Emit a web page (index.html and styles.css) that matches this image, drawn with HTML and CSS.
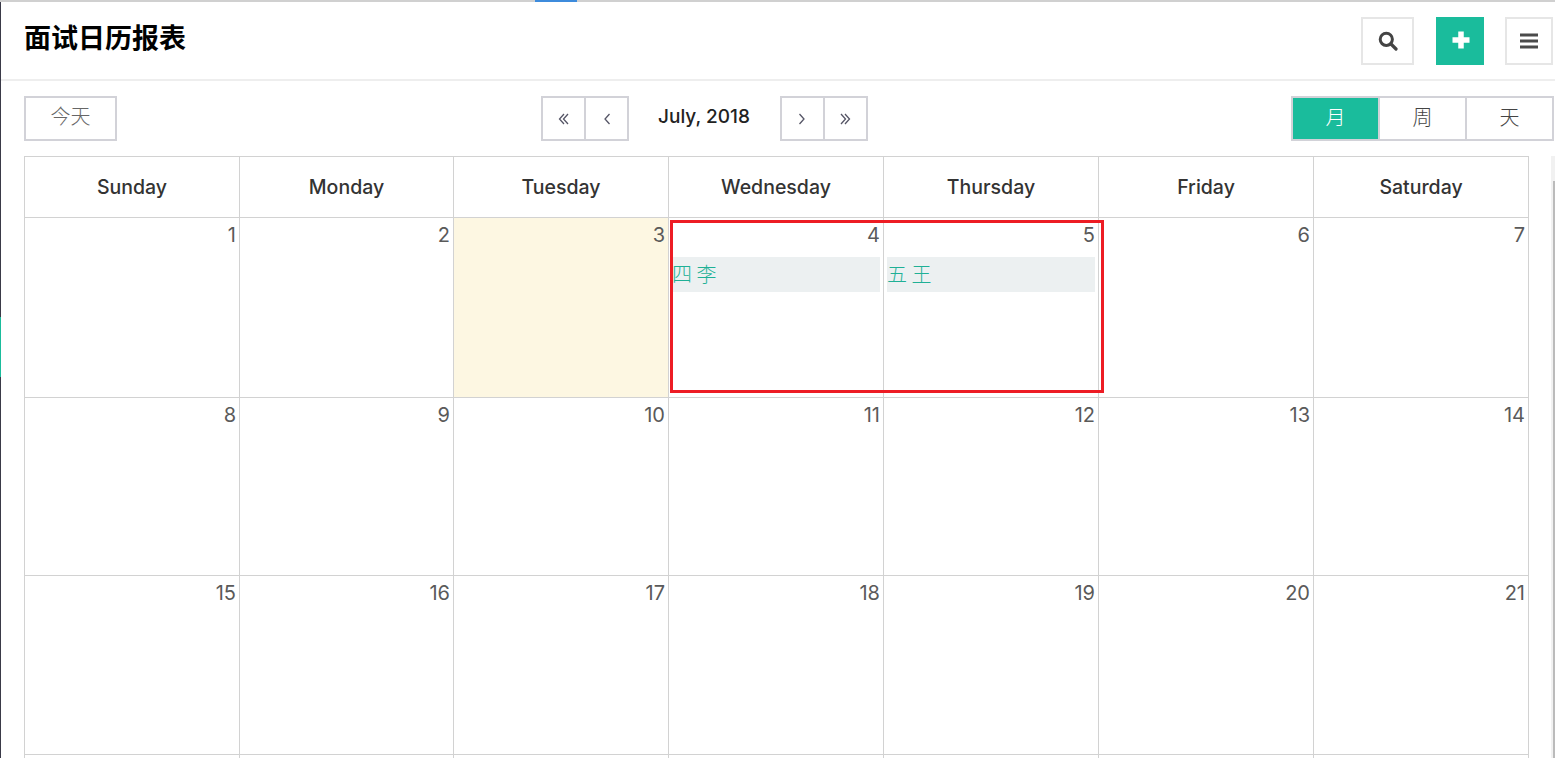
FILE: index.html
```html
<!DOCTYPE html>
<html lang="zh-CN">
<head>
    <meta charset="UTF-8">
    <title>面试日历报表</title>
    <link rel="stylesheet" href="styles.css">
</head>
<body>
    <div class="top-line"><span class="top-line-active"></span></div>

    <div class="page">
        <div class="side-strip"><span class="side-strip-active"></span></div>

        <div class="main">
            <header class="header">
                <h1>面试日历报表</h1>
                <div class="header-actions">
                    <button class="icon-btn search-btn">
                        <svg width="20" height="20" viewBox="0 0 20 20"><circle cx="8.300" cy="8.300" r="6.100" fill="none" stroke="#444" stroke-width="3"/><path d="M13 13l5 5" stroke="#444" stroke-width="3.200" stroke-linecap="round"/></svg>
                    </button>
                    <button class="icon-btn add-btn">
                        <svg class="add-icon" width="18" height="18" viewBox="0 0 18 18"><path d="M9 .5v17M.5 9h17" stroke="#fff" stroke-width="5.500"/></svg>
                    </button>
                    <button class="icon-btn menu-btn">
                        <svg width="18" height="16" viewBox="0 0 18 16"><path d="M0 2h18M0 8h18M0 14h18" stroke="#4a4a4a" stroke-width="3"/></svg>
                    </button>
                </div>
            </header>

            <div class="toolbar">
                <button class="btn today-btn">今天</button>

                <div class="month-nav">
                    <div class="btn-group">
                        <button class="btn nav-btn">
                            <svg width="12" height="12" viewBox="-1 0 12 12"><path d="M6 1L1.500 6 6 11M10 1L5.500 6l4.500 5" class="chev"/></svg>
                        </button>
                        <button class="btn nav-btn">
                            <svg width="8" height="12" viewBox="-1 0 8 12"><path d="M6.500 1L2 6l4.500 5" class="chev"/></svg>
                        </button>
                    </div>
                    <span class="month-title">July, 2018</span>
                    <div class="btn-group">
                        <button class="btn nav-btn">
                            <svg width="8" height="12" viewBox="0 0 8 12"><path d="M1.500 1L6 6l-4.500 5" class="chev"/></svg>
                        </button>
                        <button class="btn nav-btn">
                            <svg width="12" height="12" viewBox="0 0 12 12"><path d="M2 1l4.500 5L2 11M6 1l4.500 5L6 11" class="chev"/></svg>
                        </button>
                    </div>
                </div>

                <div class="btn-group view-group">
                    <button class="btn view-btn active">月</button>
                    <button class="btn view-btn">周</button>
                    <button class="btn view-btn">天</button>
                </div>
            </div>

            <div class="calendar-wrap">
                <table class="calendar">
                    <thead>
                        <tr>
                            <th>Sunday</th><th class="narrow-col">Monday</th><th>Tuesday</th><th>Wednesday</th><th>Thursday</th><th>Friday</th><th>Saturday</th>
                        </tr>
                    </thead>
                    <tbody>
                        <tr class="row-first">
                            <td><div class="day-num">1</div></td>
                            <td><div class="day-num">2</div></td>
                            <td class="today"><div class="day-num">3</div></td>
                            <td><div class="day-num">4</div><div class="event">四 李</div></td>
                            <td><div class="day-num">5</div><div class="event">五 王</div></td>
                            <td><div class="day-num">6</div></td>
                            <td><div class="day-num">7</div></td>
                        </tr>
                        <tr class="row-second">
                            <td><div class="day-num">8</div></td>
                            <td><div class="day-num">9</div></td>
                            <td><div class="day-num">10</div></td>
                            <td><div class="day-num">11</div></td>
                            <td><div class="day-num">12</div></td>
                            <td><div class="day-num">13</div></td>
                            <td><div class="day-num">14</div></td>
                        </tr>
                        <tr class="row-third">
                            <td><div class="day-num">15</div></td>
                            <td><div class="day-num">16</div></td>
                            <td><div class="day-num">17</div></td>
                            <td><div class="day-num">18</div></td>
                            <td><div class="day-num">19</div></td>
                            <td><div class="day-num">20</div></td>
                            <td><div class="day-num">21</div></td>
                        </tr>
                        <tr class="row-third">
                            <td></td><td></td><td></td><td></td><td></td><td></td><td></td>
                        </tr>
                    </tbody>
                </table>
                <div class="scroll-track"><div class="scroll-thumb"></div></div>
            </div>
        </div>
    </div>

    <!-- 红框标注 -->
    <div class="red-mark"></div>
</body>
</html>
```

FILE: styles.css
```css
* {
    box-sizing: border-box;
}

html, body {
    height: 100%;
}

body {
    margin: 0;
    overflow: hidden;
    background: #fff;
    font-family: Inter, "Noto Sans CJK SC", sans-serif;
    color: #333;
}

.top-line {
    height: 2px;
    background: #d0d0d0;
    padding-left: 535px;
}

.top-line-active {
    display: block;
    width: 42px;
    height: 2px;
    background: #3d8bdc;
}

.page {
    display: flex;
    height: 756px;
}

.side-strip {
    flex: none;
    width: 1px;
    background: #3a3a48;
    padding-top: 315px;
}

.side-strip-active {
    display: block;
    height: 60px;
    background: #1abc9c;
}

.main {
    flex: 1;
    min-width: 0;
}

.header {
    height: 79px;
    border-bottom: 2px solid #eee;
    padding: 15px 2px 0 23px;
    display: flex;
    justify-content: space-between;
}

h1 {
    margin: 0;
    font-family: "Noto Sans CJK SC", sans-serif;
    font-size: 27px;
    line-height: 40px;
    font-weight: 700;
    color: #000;
}

.header-actions {
    display: flex;
}

.icon-btn {
    height: 48px;
    padding: 0;
    background: #fff;
    border: 2px solid #e6e6e6;
    display: flex;
    align-items: center;
    justify-content: center;
}

.search-btn {
    width: 53px;
    margin-right: 22px;
}

.add-btn {
    width: 48px;
    margin-right: 21px;
    background: #1abc9c;
    border-color: #1abc9c;
}

.add-icon {
    margin: 0 0 2px 1px;
}

.menu-btn {
    width: 48px;
}

.toolbar {
    height: 75px;
    padding: 15px 1px 0 23px;
    display: flex;
    justify-content: space-between;
    align-items: flex-start;
}

.btn {
    height: 45px;
    padding: 0 0 4px;
    background: #fff;
    border: 2px solid #d2d2d8;
    font-family: "Noto Sans CJK SC", sans-serif;
    font-size: 20px;
    font-weight: 300;
    color: #444;
    display: flex;
    align-items: center;
    justify-content: center;
}

.today-btn {
    width: 93px;
    padding-bottom: 6px;
    color: #666;
}

.btn-group {
    display: flex;
}

.btn-group .btn + .btn {
    margin-left: -2px;
}

.month-nav {
    display: flex;
    align-items: flex-start;
}

.nav-btn {
    width: 45px;
    padding: 0;
}

.chev {
    fill: none;
    stroke: #556;
    stroke-width: 1.300;
}

.month-title {
    width: 151px;
    text-align: center;
    font-size: 19px;
    font-weight: 450;
    line-height: 41px;
    color: #222;
}

.view-btn {
    width: 89px;
}

.view-btn.active {
    background: #1abc9c;
    color: #fff;
}

.calendar-wrap {
    height: 602px;
    overflow: hidden;
    display: flex;
    justify-content: space-between;
    padding-left: 23px;
}

.calendar {
    width: 1505px;
    table-layout: fixed;
    border-collapse: collapse;
    flex: none;
}

.calendar th,
.calendar td {
    border: 1px solid #d2d2d2;
    padding: 0;
    vertical-align: top;
}

.calendar th {
    height: 61px;
    padding-bottom: 1px;
    vertical-align: middle;
    font-size: 19.500px;
    font-weight: 450;
    color: #333;
}

.calendar th.narrow-col {
    width: 214px;
}

.row-first td {
    height: 180px;
}

.row-second td {
    height: 178px;
}

.row-third td {
    height: 179px;
}

.calendar td.today {
    background: #fdf7e2;
}

.day-num {
    padding: 5px 3px 0 0;
    text-align: right;
    font-size: 20px;
    line-height: 25px;
    color: #5a5a5a;
}

.event {
    margin: 9px 3px 0 3px;
    height: 35px;
    background: #ecf0f1;
    font-family: "Noto Sans CJK SC", sans-serif;
    font-size: 20px;
    font-weight: 300;
    line-height: 33px;
    color: #1fb096;
}

.scroll-track {
    flex: none;
    width: 4px;
    background: #f1f1f1;
    padding-top: 25px;
}

.scroll-thumb {
    height: 100%;
    margin-left: 2px;
    background: #bbb;
}

.red-mark {
    position: absolute;
    left: 670px;
    top: 220px;
    width: 434px;
    height: 173px;
    border: 3px solid #ed1c24;
}
```
